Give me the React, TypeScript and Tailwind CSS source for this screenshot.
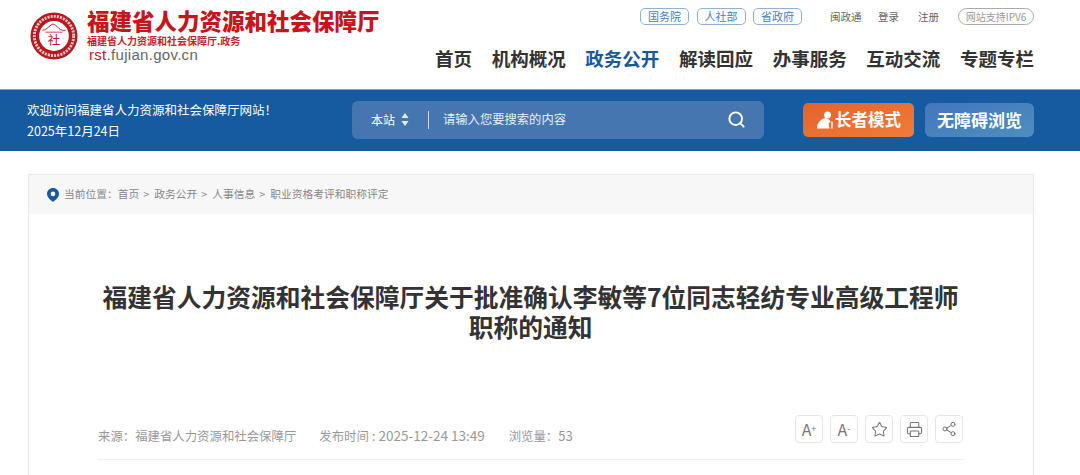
import { Search, Star, Printer, Share2 } from "lucide-react";

const FONT = '"Noto Sans CJK SC", "Noto Sans", sans-serif';

const NAV = [
  { label: "首页" },
  { label: "机构概况" },
  { label: "政务公开", active: true },
  { label: "解读回应" },
  { label: "办事服务" },
  { label: "互动交流" },
  { label: "专题专栏" },
];

const CRUMBS = ["政务公开", "人事信息", "职业资格考评和职称评定"];

function Seal() {
  return (
    <svg width="48" height="48" viewBox="0 0 50 50" className="shrink-0">
      <circle cx="25" cy="25" r="24.5" fill="#b3191f" />
      <circle cx="25" cy="25" r="20.5" fill="none" stroke="#f0c4c4" strokeWidth="3" strokeDasharray="2.2 1.1" />
      <circle cx="25" cy="25" r="15.5" fill="#fff" />
      <path d="M13 19 C16 19 19 16 22 13.5 C25 11 28 15 30 17 C32 19 35 19.5 37 19" fill="none" stroke="#b3191f" strokeWidth="1" />
      <path d="M16 21 H34" stroke="#b3191f" strokeWidth="0.8" />
      <text x="25" y="34" textAnchor="middle" fontSize="13" fill="#b3191f" fontFamily={FONT}>社</text>
    </svg>
  );
}

function ElderIcon() {
  return (
    <svg width="20" height="20" viewBox="0 0 20 20" className="shrink-0">
      <circle cx="12.5" cy="5" r="3.4" fill="#fff" />
      <path d="M8.5 8.5 C12 7.8 15.5 9.5 15.5 12.5 L13.5 12.8 L14.5 18.5 H2 C2 14 4.5 10.5 8.5 8.5 Z" fill="#fff" />
      <path d="M17 11.5 V18.5" stroke="#fff" strokeWidth="1.4" />
    </svg>
  );
}

function PinIcon() {
  return (
    <svg width="12" height="14" viewBox="0 0 12 14" className="shrink-0">
      <path fillRule="evenodd" d="M6 0 C9.3 0 12 2.6 12 5.8 C12 9.5 8 12.5 6 14 C4 12.5 0 9.5 0 5.8 C0 2.6 2.7 0 6 0 Z M6 3.6 A2.3 2.3 0 1 0 6 8.2 A2.3 2.3 0 1 0 6 3.6 Z" fill="#17599f" />
    </svg>
  );
}

function SortIcon() {
  return (
    <svg width="8" height="13" viewBox="0 0 8 13" className="ml-[6px] shrink-0">
      <path d="M4 0 L7.5 5 H0.5 Z M0.5 8 H7.5 L4 13 Z" fill="#e6edf6" />
    </svg>
  );
}

function ToolBtn({ children }: { children: React.ReactNode }) {
  return (
    <div className="flex h-7 w-7 items-center justify-center rounded border border-[#e6e6e6] text-[#777]">
      {children}
    </div>
  );
}

function Pill({ label }: { label: string }) {
  return (
    <div className="flex h-[17px] w-[49px] items-center justify-center rounded-[5px] border border-[#8fb1d8] text-[11px] leading-none text-[#4a7db5]">
      {label}
    </div>
  );
}

export default function App() {
  return (
    <div className="h-[475px] w-[1080px] overflow-hidden bg-white" style={{ fontFamily: FONT }}>
      {/* top header */}
      <header className="flex h-[89px] justify-between pl-[30px] pr-[46px]">
        <div className="flex items-start pt-[8px]">
          <div className="pt-[4px]">
            <Seal />
          </div>
          <div className="ml-[9px]">
            <div className="text-[22.5px] font-black leading-[24px] text-[#c4161c]">福建省人力资源和社会保障厅</div>
            <div className="mt-[3px] text-[10px] font-bold leading-[12px] text-[#c4262c]">福建省人力资源和社会保障厅.政务</div>
            <div className="pl-[2px] text-[15px] leading-[15px] tracking-[0.3px] text-[#666]" style={{ fontFamily: '"Liberation Sans", sans-serif' }}>
              <span className="text-[#c4161c]">rst</span>.fujian.gov.cn
            </div>
          </div>
        </div>
        <div className="flex flex-col items-end pt-[8px]">
          <div className="flex items-center">
            <div className="flex gap-[7.5px]">
              <Pill label="国务院" />
              <Pill label="人社部" />
              <Pill label="省政府" />
            </div>
            <div className="ml-[28px] flex items-center text-[10.5px] text-[#666]">
              <span>闽政通</span>
              <span className="ml-[16.5px]">登录</span>
              <span className="ml-[19px]">注册</span>
            </div>
            <div className="ml-[19px] flex h-[17px] w-[76px] items-center justify-center rounded-full border border-[#aaa] text-[10px] leading-none text-[#999]">
              网站支持IPV6
            </div>
          </div>
          <nav className="mt-[18px] flex gap-[19.67px] text-[18.5px] font-bold leading-[30px] text-[#333]">
            {NAV.map((n) => (
              <span key={n.label} className={n.active ? "text-[#17599f]" : ""}>
                {n.label}
              </span>
            ))}
          </nav>
        </div>
      </header>

      {/* blue band */}
      <div className="flex h-[62px] items-center border-t border-[#7ea3cf] bg-[#165a9f] pb-[2px] pl-[27px] pr-[46px]">
        <div className="w-[325px] text-[12.5px] leading-[21px] text-white">
          <div>欢迎访问福建省人力资源和社会保障厅网站！</div>
          <div>2025年12月24日</div>
        </div>
        <div className="flex h-[38px] w-[412px] items-center rounded-md bg-[#4676b0] pl-[19px] pr-[18px] text-white">
          <span className="text-[12px]">本站</span>
          <SortIcon />
          <span className="ml-[19px] h-[18px] w-px bg-[#c9d7e8]" />
          <span className="ml-[14px] flex-1 text-[12.3px] text-[#e8eef6]">请输入您要搜索的内容</span>
          <Search size={19} strokeWidth={2.4} />
        </div>
        <div className="ml-[39px] flex h-[34px] w-[111px] items-center rounded-[5px] bg-gradient-to-br from-[#e5622d] to-[#ee7d38] pl-[12px] text-[16.5px] font-bold text-white">
          <ElderIcon />
          <span>长者模式</span>
        </div>
        <div className="ml-[11px] flex h-[34px] w-[109px] items-center justify-center rounded-[6px] bg-gradient-to-br from-[#4575c0] to-[#4c8fbc] text-[17px] font-bold text-white">
          无障碍浏览
        </div>
      </div>

      {/* article card */}
      <div className="ml-[28px] mr-[46px] mt-[23px] h-[400px] border border-[#e8e8e8]">
        <div className="flex h-[39px] items-center gap-[4px] bg-[#f7f7f7] pl-[18px] text-[10.75px] text-[#888]">
          <PinIcon />
          <span className="ml-[1px]">当前位置：首页</span>
          {CRUMBS.map((c) => (
            <span key={c} className="flex gap-[5px]">
              <span>&gt;</span>
              <span>{c}</span>
            </span>
          ))}
        </div>
        <div className="pl-[69px] pr-[70px]">
          <h1 className="mt-[67px] text-center text-[24.75px] font-bold leading-[30px] text-[#333]">
            福建省人力资源和社会保障厅关于批准确认李敏等7位同志轻纺专业高级工程师
            <br />
            职称的通知
          </h1>
          <div className="mt-[74px] flex items-start justify-between border-b border-[#f0f0f0] pb-[15px]">
            <div className="flex items-baseline pt-[13px] text-[12.4px] leading-[15px] text-[#999]">
              <span>来源：福建省人力资源和社会保障厅</span>
              <span className="ml-[23px]">
                发布时间<span className="text-[13.5px]"> : 2025-12-24 13:49</span>
              </span>
              <span className="ml-[24px]">
                浏览量：<span className="text-[13px]">53</span>
              </span>
            </div>
            <div className="flex gap-[7px]">
              <ToolBtn>
                <span className="text-[16px] leading-none">A<sup className="text-[9px]">+</sup></span>
              </ToolBtn>
              <ToolBtn>
                <span className="text-[16px] leading-none">A<sup className="text-[9px]">-</sup></span>
              </ToolBtn>
              <ToolBtn>
                <Star size={17} strokeWidth={1.5} />
              </ToolBtn>
              <ToolBtn>
                <Printer size={17} strokeWidth={1.5} />
              </ToolBtn>
              <ToolBtn>
                <Share2 size={16} strokeWidth={1.5} />
              </ToolBtn>
            </div>
          </div>
        </div>
      </div>
    </div>
  );
}
